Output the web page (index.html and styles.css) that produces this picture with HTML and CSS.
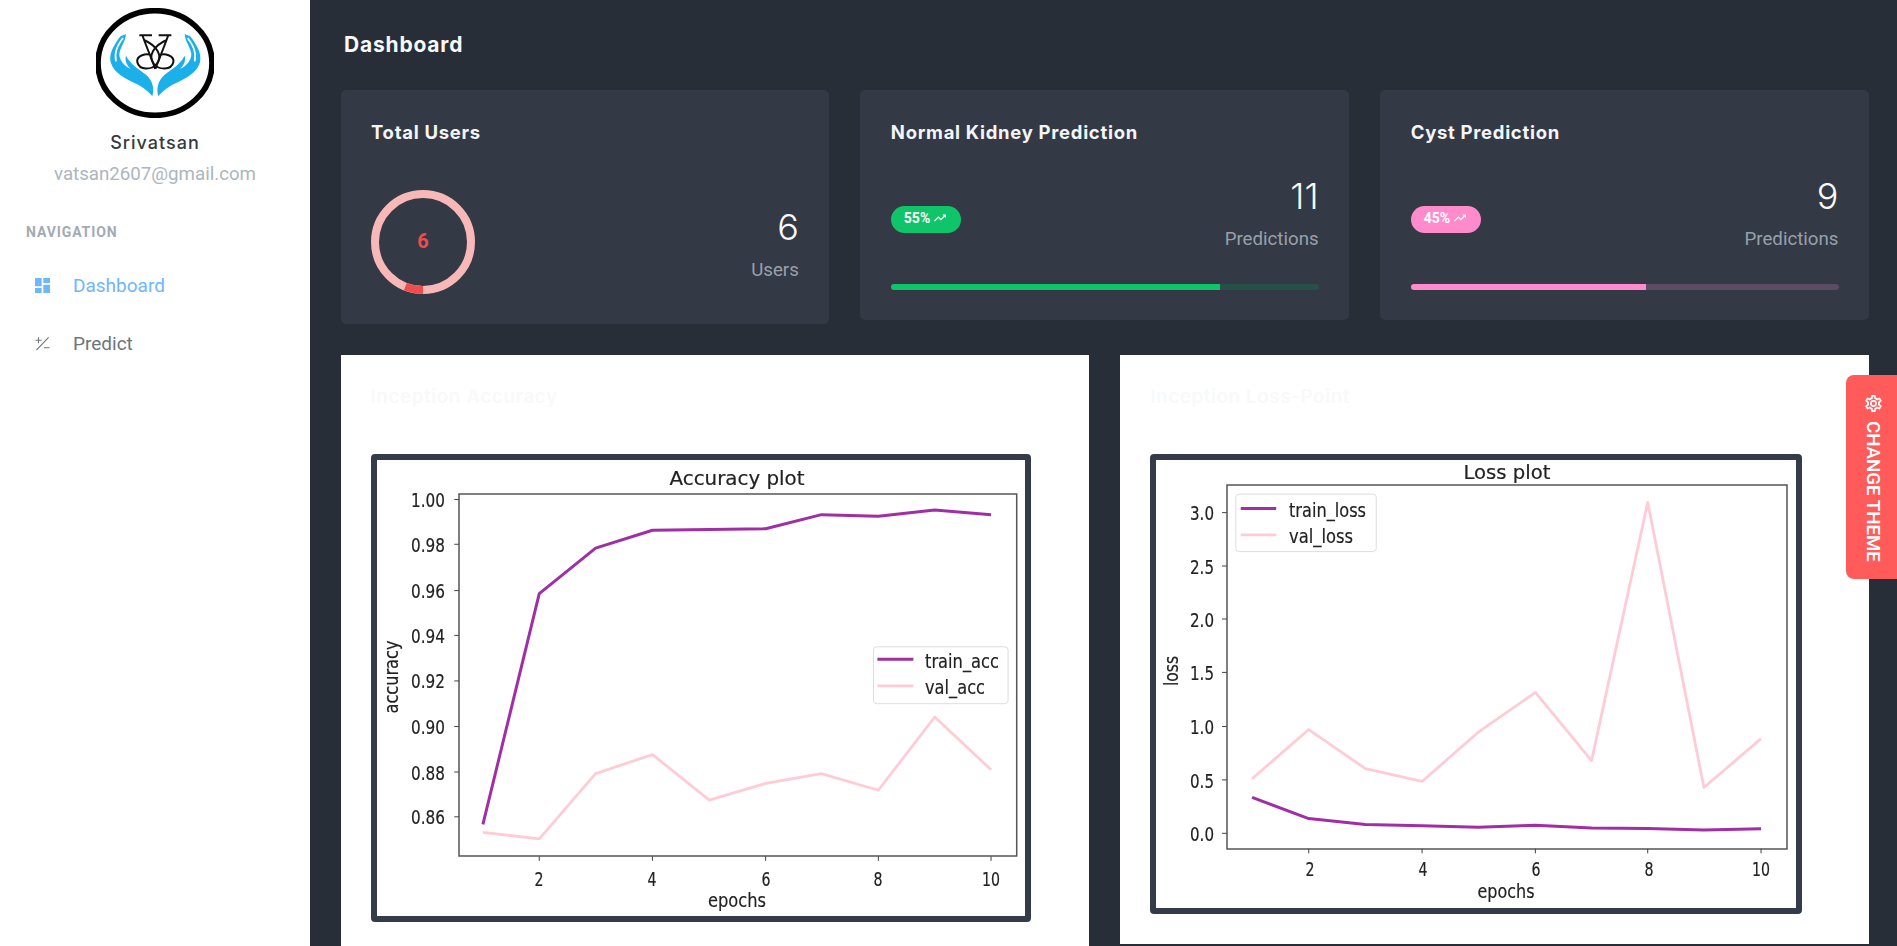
FILE: index.html
```html
<!DOCTYPE html>
<html lang="en">
<head>
<meta charset="utf-8">
<title>Dashboard</title>
<link rel="stylesheet" href="styles.css">
</head>
<body>
<div class="app">
  <aside class="sidebar">
    <svg class="logo" viewBox="288 22 354 330" aria-label="Logo">
      <ellipse class="logo-ring" cx="465" cy="187" rx="171" ry="157"/>
      <g id="hand">
        <path class="logo-hand" d="M360 108C340 135 326 160 332 185C340 215 375 235 410 250C430 260 448 275 457 287C464 262 458 240 438 222C420 208 392 192 378 165C374 180 380 192 392 205C372 196 358 178 358 160C360 140 376 125 378 100C372 104 366 104 360 108Z"/>
        <path class="logo-gap" d="M369 112C352 135 342 155 348 182"/>
        <path class="logo-mono" d="M418 104H456M428 106C440 140 455 175 466 205M432 118C470 135 490 165 470 190C455 208 418 210 412 185C408 165 440 155 455 165"/>
      </g>
      <use href="#hand" transform="matrix(-1 0 0 1 932 0)"/>
    </svg>
    <div class="user-name">Srivatsan</div>
    <div class="user-mail">vatsan2607@gmail.com</div>
    <div class="nav-title">NAVIGATION</div>
    <nav class="nav">
      <a class="nav-item is-active">
        <svg class="nav-icon" viewBox="3 3 18 18"><path d="M13 3V9H21V3M13 21H21V11H13M3 21H11V15H3M3 13H11V3H3V13Z"/></svg>
        <span>Dashboard</span>
      </a>
      <a class="nav-item">
        <svg class="nav-icon nav-icon-line" viewBox="0 0 16 16"><path d="M0.5 4.5H7M3.75 1.2V7.8M14.5 1.5L1.5 15M9.5 12.5H15.5"/></svg>
        <span>Predict</span>
      </a>
    </nav>
  </aside>

  <main class="main">
    <h1 class="page-title">Dashboard</h1>

    <section class="stats">
      <article class="stat-card">
        <h2 class="card-title">Total Users</h2>
        <div class="stat-users">
          <div class="ring">
            <svg class="ring-svg" viewBox="0 0 104 104">
              <circle class="ring-track" cx="52" cy="52" r="48"/>
              <circle class="ring-value" cx="52" cy="52" r="48" transform="rotate(90 52 52)"/>
            </svg>
            <span class="ring-label">6</span>
          </div>
          <div class="figure figure-shift">
            <div class="figure-num">6</div>
            <div class="figure-unit">Users</div>
          </div>
        </div>
      </article>

      <article class="stat-card">
        <h2 class="card-title">Normal Kidney Prediction</h2>
        <div class="stat-row">
          <span class="badge badge-green">55%
            <svg class="badge-icon" viewBox="2 6 20 12"><path d="M16 6L18.29 8.29L13.41 13.17L9.41 9.17L2 16.59L3.41 18L9.41 12L13.41 16L19.71 9.71L22 12V6H16Z"/></svg>
          </span>
          <div class="figure">
            <div class="figure-num">11</div>
            <div class="figure-unit">Predictions</div>
          </div>
        </div>
        <div class="progress progress-green"><div class="progress-bar" style="width:77%"></div></div>
      </article>

      <article class="stat-card">
        <h2 class="card-title">Cyst Prediction</h2>
        <div class="stat-row">
          <span class="badge badge-pink">45%
            <svg class="badge-icon" viewBox="2 6 20 12"><path d="M16 6L18.29 8.29L13.41 13.17L9.41 9.17L2 16.59L3.41 18L9.41 12L13.41 16L19.71 9.71L22 12V6H16Z"/></svg>
          </span>
          <div class="figure">
            <div class="figure-num">9</div>
            <div class="figure-unit">Predictions</div>
          </div>
        </div>
        <div class="progress progress-pink"><div class="progress-bar" style="width:55%"></div></div>
      </article>
    </section>

    <section class="plots">
      <article class="plot-card">
        <h2 class="plot-title">Inception Accuracy</h2>
        <div class="plot-frame">
          <svg class="chart chart-acc" viewBox="0 0 648 456">
            <rect class="axes" x="82" y="34" width="557.700" height="362"/>
            <g transform="scale(.4858 .3796) translate(-78 -288)">
              <path class="ticks" d="M237 392H247M237 510H247M237 632H247M237 750H247M237 870H247M237 990H247M237 1110H247M237 1228H247M412 1332V1344M645 1332V1344M878 1332V1344M1110 1332V1344M1342 1332V1344"/>
              <polyline class="line-val" points="296,1269 412,1286 528,1114 645,1064 762,1184 878,1140 993,1114 1110,1158 1226,965 1342,1104"/>
              <polyline class="line-train" points="296,1248 412,640 528,520 645,473 762,471 878,469 993,432 1110,436 1226,420 1342,432"/>
              <rect class="legend" x="1100" y="780" width="277" height="150" rx="8"/>
              <path class="line-train" d="M1108 813H1182"/>
              <path class="line-val" d="M1108 883H1182"/>
            </g>
            <text class="chart-text" x="68" y="47" text-anchor="end" textLength="34" lengthAdjust="spacingAndGlyphs">1.00</text>
            <text class="chart-text" x="68" y="92" text-anchor="end" textLength="34" lengthAdjust="spacingAndGlyphs">0.98</text>
            <text class="chart-text" x="68" y="138" text-anchor="end" textLength="34" lengthAdjust="spacingAndGlyphs">0.96</text>
            <text class="chart-text" x="68" y="183" text-anchor="end" textLength="34" lengthAdjust="spacingAndGlyphs">0.94</text>
            <text class="chart-text" x="68" y="228" text-anchor="end" textLength="34" lengthAdjust="spacingAndGlyphs">0.92</text>
            <text class="chart-text" x="68" y="274" text-anchor="end" textLength="34" lengthAdjust="spacingAndGlyphs">0.90</text>
            <text class="chart-text" x="68" y="320" text-anchor="end" textLength="34" lengthAdjust="spacingAndGlyphs">0.88</text>
            <text class="chart-text" x="68" y="364" text-anchor="end" textLength="34" lengthAdjust="spacingAndGlyphs">0.86</text>
            <text class="chart-text" x="162" y="426" text-anchor="middle" textLength="9" lengthAdjust="spacingAndGlyphs">2</text>
            <text class="chart-text" x="275" y="426" text-anchor="middle" textLength="9" lengthAdjust="spacingAndGlyphs">4</text>
            <text class="chart-text" x="389" y="426" text-anchor="middle" textLength="9" lengthAdjust="spacingAndGlyphs">6</text>
            <text class="chart-text" x="501" y="426" text-anchor="middle" textLength="9" lengthAdjust="spacingAndGlyphs">8</text>
            <text class="chart-text" x="614" y="426" text-anchor="middle" textLength="18" lengthAdjust="spacingAndGlyphs">10</text>
            <text class="chart-text" x="360" y="447" text-anchor="middle" textLength="58" lengthAdjust="spacingAndGlyphs">epochs</text>
            <text class="chart-text chart-head" x="360" y="25" text-anchor="middle" textLength="135" lengthAdjust="spacingAndGlyphs">Accuracy plot</text>
            <text class="chart-text" transform="translate(21 217) rotate(-90)" text-anchor="middle" textLength="73" lengthAdjust="spacingAndGlyphs">accuracy</text>
            <text class="chart-text" x="548" y="208" textLength="74" lengthAdjust="spacingAndGlyphs">train_acc</text>
            <text class="chart-text" x="548" y="234" textLength="60" lengthAdjust="spacingAndGlyphs">val_acc</text>
          </svg>
        </div>
      </article>

      <article class="plot-card">
        <h2 class="plot-title">Inception Loss-Point</h2>
        <div class="plot-frame">
          <svg class="chart chart-loss" viewBox="0 0 640 448">
            <rect class="axes" x="71" y="25" width="560" height="364"/>
            <g transform="scale(.4927 .3786) translate(-98 -288)">
              <path class="ticks" d="M232 427H242M232 568H242M232 708H242M232 849H242M232 992H242M232 1133H242M232 1274H242M408 1315V1327M638 1315V1327M868 1315V1327M1096 1315V1327M1326 1315V1327"/>
              <polyline class="line-val" points="293,1130 408,1000 523,1103 638,1137 752,1007 868,902 982,1082 1096,400 1210,1153 1326,1024"/>
              <polyline class="line-train" points="293,1179 408,1235 523,1251 638,1254 752,1258 868,1253 982,1260 1096,1261 1210,1265 1326,1262"/>
              <rect class="legend" x="260" y="378" width="285" height="152" rx="8"/>
              <path class="line-train" d="M270 416H342"/>
              <path class="line-val" d="M270 486H342"/>
            </g>
            <text class="chart-text" x="58" y="60" text-anchor="end" textLength="24" lengthAdjust="spacingAndGlyphs">3.0</text>
            <text class="chart-text" x="58" y="114" text-anchor="end" textLength="24" lengthAdjust="spacingAndGlyphs">2.5</text>
            <text class="chart-text" x="58" y="167" text-anchor="end" textLength="24" lengthAdjust="spacingAndGlyphs">2.0</text>
            <text class="chart-text" x="58" y="220" text-anchor="end" textLength="24" lengthAdjust="spacingAndGlyphs">1.5</text>
            <text class="chart-text" x="58" y="274" text-anchor="end" textLength="24" lengthAdjust="spacingAndGlyphs">1.0</text>
            <text class="chart-text" x="58" y="328" text-anchor="end" textLength="24" lengthAdjust="spacingAndGlyphs">0.5</text>
            <text class="chart-text" x="58" y="381" text-anchor="end" textLength="24" lengthAdjust="spacingAndGlyphs">0.0</text>
            <text class="chart-text" x="154" y="416" text-anchor="middle" textLength="9" lengthAdjust="spacingAndGlyphs">2</text>
            <text class="chart-text" x="267" y="416" text-anchor="middle" textLength="9" lengthAdjust="spacingAndGlyphs">4</text>
            <text class="chart-text" x="380" y="416" text-anchor="middle" textLength="9" lengthAdjust="spacingAndGlyphs">6</text>
            <text class="chart-text" x="493" y="416" text-anchor="middle" textLength="9" lengthAdjust="spacingAndGlyphs">8</text>
            <text class="chart-text" x="605" y="416" text-anchor="middle" textLength="18" lengthAdjust="spacingAndGlyphs">10</text>
            <text class="chart-text" x="350" y="438" text-anchor="middle" textLength="57" lengthAdjust="spacingAndGlyphs">epochs</text>
            <text class="chart-text chart-head" x="351" y="19" text-anchor="middle" textLength="87" lengthAdjust="spacingAndGlyphs">Loss plot</text>
            <text class="chart-text" transform="translate(22 211) rotate(-90)" text-anchor="middle" textLength="30" lengthAdjust="spacingAndGlyphs">loss</text>
            <text class="chart-text" x="133" y="57" textLength="77" lengthAdjust="spacingAndGlyphs">train_loss</text>
            <text class="chart-text" x="133" y="83" textLength="64" lengthAdjust="spacingAndGlyphs">val_loss</text>
          </svg>
        </div>
      </article>
    </section>
  </main>
</div>

<button class="theme-btn" type="button">
  <svg class="theme-icon" viewBox="2 2 20 20"><path d="M12,8A4,4 0 0,1 16,12A4,4 0 0,1 12,16A4,4 0 0,1 8,12A4,4 0 0,1 12,8M12,10A2,2 0 0,0 10,12A2,2 0 0,0 12,14A2,2 0 0,0 14,12A2,2 0 0,0 12,10M10,22C9.75,22 9.54,21.82 9.5,21.58L9.13,18.93C8.5,18.68 7.96,18.34 7.44,17.94L4.95,18.95C4.73,19.03 4.46,18.95 4.34,18.73L2.34,15.27C2.21,15.05 2.27,14.78 2.46,14.63L4.57,12.97L4.5,12L4.57,11L2.46,9.37C2.27,9.22 2.21,8.95 2.34,8.73L4.34,5.27C4.46,5.05 4.73,4.96 4.95,5.05L7.44,6.05C7.96,5.66 8.5,5.32 9.13,5.07L9.5,2.42C9.54,2.18 9.75,2 10,2H14C14.25,2 14.46,2.18 14.5,2.42L14.87,5.07C15.5,5.32 16.04,5.66 16.56,6.05L19.05,5.05C19.27,4.96 19.54,5.05 19.66,5.27L21.66,8.73C21.79,8.95 21.73,9.22 21.54,9.37L19.43,11L19.5,12L19.43,13L21.54,14.63C21.73,14.78 21.79,15.05 21.66,15.27L19.66,18.73C19.54,18.95 19.27,19.04 19.05,18.95L16.56,17.95C16.04,18.34 15.5,18.68 14.87,18.93L14.5,21.58C14.46,21.82 14.25,22 14,22H10M11.25,4L10.88,6.61C9.68,6.86 8.62,7.5 7.85,8.39L5.44,7.35L4.69,8.65L6.8,10.2C6.4,11.37 6.4,12.64 6.8,13.8L4.68,15.36L5.43,16.66L7.86,15.62C8.63,16.5 9.68,17.14 10.87,17.38L11.24,20H12.76L13.13,17.39C14.32,17.14 15.37,16.5 16.14,15.62L18.57,16.66L19.32,15.36L17.2,13.81C17.6,12.64 17.6,11.37 17.2,10.2L19.31,8.65L18.56,7.35L16.15,8.39C15.38,7.5 14.32,6.86 13.12,6.62L12.75,4H11.25Z"/></svg>
  <span class="theme-text">CHANGE THEME</span>
</button>
</body>
</html>
```
FILE: styles.css
```css
* { box-sizing: border-box; }
html, body { margin: 0; height: 100%; overflow: hidden; }
body { font-family: Roboto, "Liberation Sans", sans-serif; background: #282e38; }

.app { display: flex; height: 946px; overflow: hidden; }

/* Sidebar */
.sidebar { flex: 0 0 310px; background: #fff; padding-top: 4px; display: flex; flex-direction: column; }
.logo { display: block; width: 118px; height: 110px; margin: 4px auto 0; flex: none; }
.logo-ring { fill: #fff; stroke: #000; stroke-width: 17; }
.logo-hand { fill: #1cb0ea; }
.logo-gap { fill: none; stroke: #fff; stroke-width: 5; }
.logo-mono { fill: none; stroke: #111; stroke-width: 6; }
.user-name { margin-top: 13px; text-align: center; font: 500 18px/24px Inter, sans-serif; letter-spacing: 1px; color: #343a40; }
.user-mail { margin-top: 7px; text-align: center; font-size: 18.7px; line-height: 24px; color: #adb5bd; }
.nav-title { margin: 38px 0 0 26px; font-size: 14px; line-height: 16px; font-weight: 700; letter-spacing: .9px; color: #a1abb5; }
.nav { margin-top: 16px; display: flex; flex-direction: column; }
.nav-item { display: flex; align-items: center; height: 58px; padding-left: 35px; font-size: 19px; color: #6c757d; }
.nav-item.is-active { color: #6fb6fb; }
.nav-icon { width: 15px; height: 15px; margin-right: 23px; fill: currentColor; flex: none; }
.nav-icon-line { fill: none; stroke: currentColor; stroke-width: 1.2; }

/* Main */
.main { flex: 1; min-width: 0; padding: 33px 28px 0 30.500px; }
.page-title { margin: 0 0 33px 3.500px; font: 700 21px/24px Inter, sans-serif; letter-spacing: .8px; color: #f7f9fa; }
.stats { display: grid; grid-template-columns: repeat(3, 1fr); gap: 31px; align-items: start; }
.stat-card { background: #333945; border-radius: 5px; padding: 30px 30.500px; }
.card-title { margin: 0; font: 700 18.500px/24px Inter, sans-serif; letter-spacing: .7px; color: #f3f5f7; }

.stat-users { margin-top: 46px; display: flex; justify-content: space-between; align-items: center; }
.ring { position: relative; width: 104px; height: 104px; flex: none; }
.ring-svg { display: block; width: 104px; height: 104px; }
.ring-track, .ring-value { fill: none; stroke-width: 8; }
.ring-track { stroke: #f9b8b8; }
.ring-value { stroke: #ef4d4d; stroke-dasharray: 18.1 283.5; }
.ring-label { position: absolute; inset: 0 0 2px; display: flex; align-items: center; justify-content: center; font-size: 20px; font-weight: 700; color: #ef4d4d; }

.stat-row { margin-top: 30px; display: flex; justify-content: space-between; align-items: flex-start; }
.figure { text-align: right; }
.figure-shift { margin-top: 4px; }
.figure-num { font: 300 36px/44px Inter, sans-serif; color: #f7f9fa; }
.figure-unit { margin-top: 7px; font-size: 18.7px; line-height: 28px; color: #98a0ac; }

.badge { margin-top: 32px; height: 27px; width: 70px; padding: 0 0 3px 13px; border-radius: 14px; display: flex; align-items: center; gap: 4px; font-size: 14px; font-weight: 700; color: #fff; }
.badge-green { background: #10c469; }
.badge-pink { background: #ff8acc; }
.badge-icon { width: 12px; height: 8px; fill: #fff; flex: none; }

.progress { margin-top: 31px; height: 6px; border-radius: 3px; overflow: hidden; }
.progress-bar { height: 100%; }
.progress-green { background: #26514b; }
.progress-green .progress-bar { background: #10c469; }
.progress-pink { background: #5d4a63; }
.progress-pink .progress-bar { background: #ff8acc; }

/* Plots */
.plots { margin-top: 31px; display: grid; grid-template-columns: 1fr 1fr; gap: 31px; align-items: start; }
.plot-card { background: #fff; padding: 30px; }
.plot-title { margin: 0 0 45px; font: 600 19px/24px Inter, sans-serif; letter-spacing: .5px; color: #f8f9fa; }
.plot-frame { width: max-content; border: 6px solid #343c49; border-radius: 4px; background: #fff; }
.chart { display: block; filter: blur(.45px); }
.chart-acc { width: 648px; height: 456px; }
.chart-loss { width: 640px; height: 448px; }
.chart-text { font-family: "DejaVu Sans", sans-serif; font-size: 20px; fill: #222; stroke: #222; stroke-width: .2; }
.chart-head { font-size: 20px; }
.axes { fill: none; stroke: #555; stroke-width: 1.5; }
.ticks { fill: none; stroke: #444; stroke-width: 1; vector-effect: non-scaling-stroke; }
.line-train, .line-val { fill: none; vector-effect: non-scaling-stroke; stroke-linejoin: round; }
.line-train { stroke: #a02fa5; stroke-width: 3; }
.line-val { stroke: #ffccd5; stroke-width: 2.8; }
.legend { fill: #fff; fill-opacity: .8; stroke: #ddd; stroke-width: 1; vector-effect: non-scaling-stroke; }

/* Theme button */
.theme-btn { position: fixed; top: 375px; right: 0; width: 51px; height: 204px; padding: 20px 0 0 3px; border: 0; border-radius: 8px 0 0 8px; background: #ff5b5b; color: #fff; display: flex; flex-direction: column; align-items: center; gap: 9px; font-family: Roboto, sans-serif; }
.theme-icon { width: 17px; height: 17px; fill: #fff; flex: none; }
.theme-text { writing-mode: vertical-rl; font-size: 18.7px; font-weight: 500; line-height: 18px; }
```
